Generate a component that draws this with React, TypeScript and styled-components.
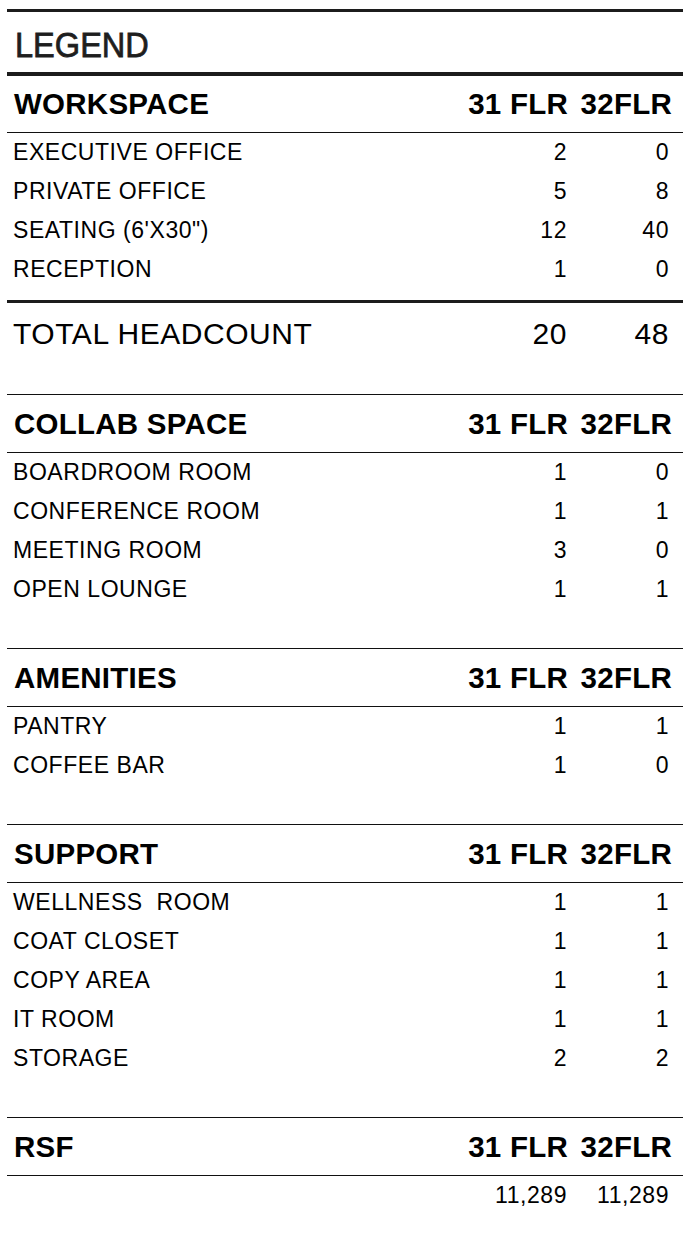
import React, { FC } from "react";
import styled, { createGlobalStyle } from "styled-components";

type Row = [string, string, string];

interface ISection {
    title: string;
    rows: Row[];
}

const GlobalStyle = createGlobalStyle`
    body {
        margin: 0;
        background: #ffffff;
        font-family: "Liberation Sans", Arial, sans-serif;
        color: #000;
    }
`;

const Sheet = styled.div`
    width: 676px;
    margin: 9px 0 0 7px;
    display: flex;
    flex-direction: column;
`;

const Rule = styled.div<{ $weight: number; $color?: string }>`
    height: ${p => p.$weight}px;
    background: ${p => p.$color || "#111"};
`;

const LegendTitle = styled.div`
    height: 60px;
    display: flex;
    align-items: center;
    padding: 6px 0 0 8px;
    box-sizing: border-box;

    & span {
        display: inline-block;
        font-size: 35px;
        color: #1e1e1e;
        -webkit-text-stroke: 0.8px #1e1e1e;
        transform: scaleX(0.93);
        transform-origin: left center;
    }
`;

const HeaderRow = styled.div<{ $height: number }>`
    height: ${p => p.$height}px;
    display: grid;
    grid-template-columns: 1fr 104px 104px;
    align-items: center;
    padding: 0 11px 0 7px;
    font-size: 29.5px;
    font-weight: bold;
    letter-spacing: 0.25px;

    & .num {
        text-align: right;
    }
`;

const DataRow = styled.div<{ $size?: number; $height?: number }>`
    height: ${p => p.$height || 39}px;
    display: grid;
    grid-template-columns: 1fr 102px 102px;
    align-items: center;
    padding: 0 14px 0 6px;
    font-size: ${p => p.$size || 23}px;
    letter-spacing: 0.55px;
    white-space: pre;

    & .num {
        text-align: right;
    }
`;

const Spacer = styled.div<{ $height: number }>`
    height: ${p => p.$height}px;
`;

const sections: ISection[] = [
    {
        title: "COLLAB SPACE",
        rows: [
            ["BOARDROOM ROOM", "1", "0"],
            ["CONFERENCE ROOM", "1", "1"],
            ["MEETING ROOM", "3", "0"],
            ["OPEN LOUNGE", "1", "1"],
        ],
    },
    {
        title: "AMENITIES",
        rows: [
            ["PANTRY", "1", "1"],
            ["COFFEE BAR", "1", "0"],
        ],
    },
    {
        title: "SUPPORT",
        rows: [
            ["WELLNESS  ROOM", "1", "1"],
            ["COAT CLOSET", "1", "1"],
            ["COPY AREA", "1", "1"],
            ["IT ROOM", "1", "1"],
            ["STORAGE", "2", "2"],
        ],
    },
];

const workspace: Row[] = [
    ["EXECUTIVE OFFICE", "2", "0"],
    ["PRIVATE OFFICE", "5", "8"],
    ["SEATING (6'X30\")", "12", "40"],
    ["RECEPTION", "1", "0"],
];

const Header: FC<{ title: string; height?: number }> = ({ title, height }) => (
    <HeaderRow $height={height || 57}>
        <span>{title}</span>
        <span className="num">31 FLR</span>
        <span className="num">32FLR</span>
    </HeaderRow>
);

const Line: FC<{ row: Row }> = ({ row }) => (
    <DataRow>
        <span>{row[0]}</span>
        <span className="num">{row[1]}</span>
        <span className="num">{row[2]}</span>
    </DataRow>
);

export default function App() {
    return (
        <Sheet>
            <GlobalStyle />
            <Rule $weight={3} $color="#1c1c1c" />
            <LegendTitle><span>LEGEND</span></LegendTitle>
            <Rule $weight={4} $color="#1c1c1c" />

            <Header title="WORKSPACE" height={56} />
            <Rule $weight={1} />
            {workspace.map(r => <Line key={r[0]} row={r} />)}
            <Spacer $height={11} />
            <Rule $weight={3} $color="#1c1c1c" />

            <DataRow $size={30} $height={62}>
                <span>TOTAL HEADCOUNT</span>
                <span className="num">20</span>
                <span className="num">48</span>
            </DataRow>
            <Spacer $height={29} />

            {sections.map(s => (
                <React.Fragment key={s.title}>
                    <Rule $weight={1} />
                    <Header title={s.title} />
                    <Rule $weight={1} />
                    {s.rows.map(r => <Line key={r[0]} row={r} />)}
                    <Spacer $height={39} />
                </React.Fragment>
            ))}

            <Rule $weight={1} />
            <Header title="RSF" />
            <Rule $weight={1} />
            <DataRow>
                <span></span>
                <span className="num">11,289</span>
                <span className="num">11,289</span>
            </DataRow>
        </Sheet>
    );
}
